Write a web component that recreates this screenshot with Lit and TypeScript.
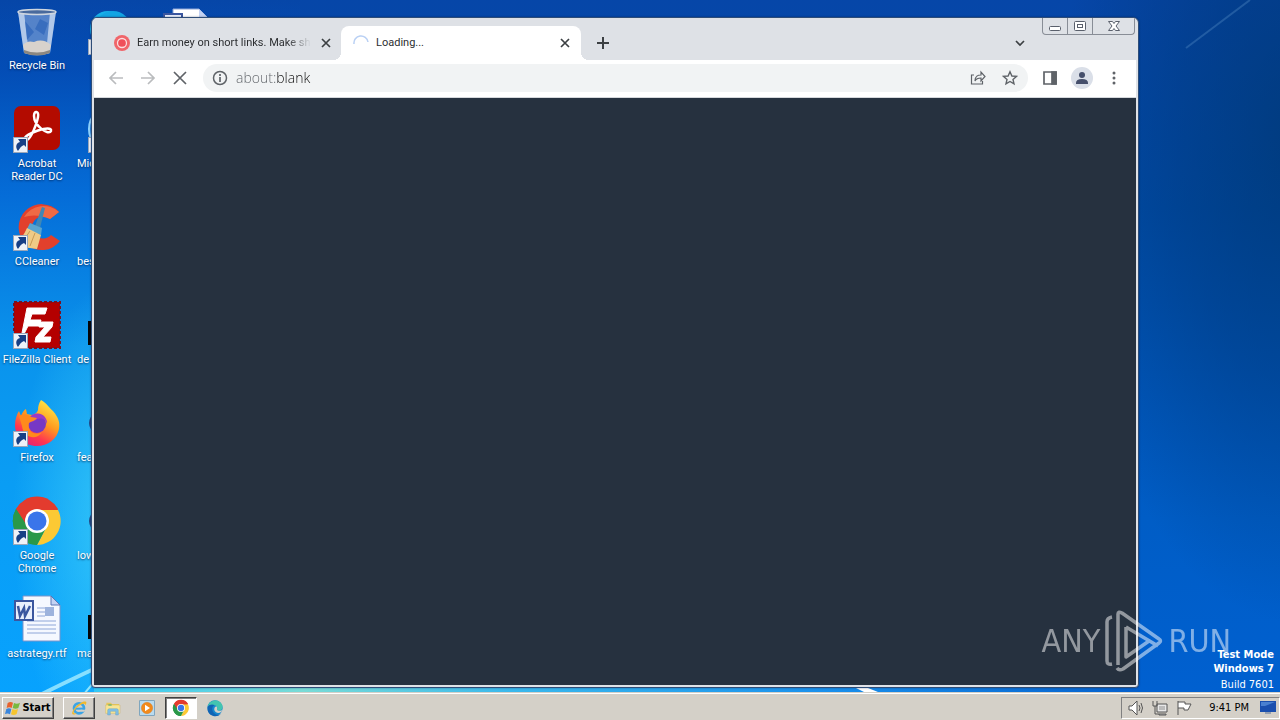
import { css, html, LitElement, svg } from "lit";
import { customElement, property } from "lit/decorators.js";

const art = {
  bin: svg`
    <path d="M5 4h38l-6 42q-13 5-26 0z" fill="#7fa3d8" fill-opacity=".65" />
    <path d="M5 5l6 41 5 1-5-42zM43 5l-6 41-4 1 4-42z" fill="#d9e6f7" fill-opacity=".7" />
    <path d="M12 14l9 11-7 8zM27 12l8 4-4 12-9-6z" fill="#2b62b8" fill-opacity=".65" />
    <path d="M10 38q4-5 11-3 9-4 17 3l-2 8q-12 4-24 0z" fill="#d8d2cc" />
    <path d="M11 43q13 5 26 0v3q-13 5-26 0z" fill="#8c8780" />
    <ellipse cx="24" cy="5" rx="19" ry="2.5" fill="#496a9d" stroke="#cfd6df" stroke-width="1.5" />`,
  acrobat: svg`
    <rect x="1" y="1" width="46" height="44" rx="7" fill="#b30b00" />
    <path d="M12 34c-2-5 28-15 26-8-2 5-17-5-17-15 0-6 5-5 4 1-1 6-7 22-11 23-1 0-2 0-2-1z"
      fill="none" stroke="#fff" stroke-width="2.5" stroke-linejoin="round" />`,
  ccleaner: svg`
    <path d="M46 9A23 23 0 1 0 47 38l-9-6a11 11 0 1 1-1-16z" fill="#e2402c" />
    <path d="M46 9A23 23 0 0 0 11 14q12-4 26 2z" fill="#ef6a45" />
    <path d="M29 4l3 1-5 20-5-2z" fill="#3f87b5" />
    <path d="M17 20l12 5-1 7-14-6z" fill="#58a5cf" />
    <path d="M14 25l14 7-4 14-22-3q8-9 12-18z" fill="#efcb86" />
    <path d="M17 28L8 41M22 30l-5 13" stroke="#c99a54" />`,
  filezilla: svg`
    <rect x="1" y="1" width="46" height="46" fill="#b40000" />
    <rect x="1" y="1" width="46" height="46" fill="none" stroke="#7a1020" stroke-width="2" stroke-dasharray="3 2" />
    <path d="M14 7h20l-2 6H19l-2 6h11l-2 6H15l-6 12H8zM27 21h13l-1 5-9 10h8l-1 5H22l1-5 9-10h-6z"
      fill="#fff" stroke="#fff" />`,
  firefox: svg`
    <defs>
      <linearGradient id="ff" x1=".8" y1="0" x2=".25" y2="1">
        <stop offset="0" stop-color="#fff04a" />
        <stop offset=".45" stop-color="#ff9a1f" />
        <stop offset=".75" stop-color="#ff3750" />
        <stop offset="1" stop-color="#e0217a" />
      </linearGradient>
    </defs>
    <path d="M28 1c7 4 8 8 12 11 6 7 7 12 6 18C44 40 35 47 24 47 11 47 2 38 2 26c0-6 2-11 4-14l2 5c1-3 3-6 5-7l1 5 5 1c3-1 5-2 6-5 0-4 1-7 3-10z"
      fill="url(#ff)" />
    <circle cx="24" cy="25" r="9" fill="#7638c5" />
    <path d="M19 16c9-5 16 3 15 9-2-6-6-6-10-5-2 3-6 2-8 4-1-3 0-6 3-8z" fill="#9a3bc6" />
    <path d="M6 17c5-2 8-2 12 1l6 1c-2 3-5 3-8 5-2 9 6 13 13 9-5 9-19 6-20-6z" fill="#ff8a1c" />`,
  chrome: svg`
    <path d="M24 24L3 12A24 24 0 0 1 45 12z" fill="#e33b2e" />
    <path d="M24 24L24 48A24 24 0 0 1 3 12z" fill="#2a9849" />
    <path d="M24 13h21A24 24 0 0 1 24 48l10-19z" fill="#fcc934" />
    <path d="M14 29L3 12A24 24 0 0 1 45 13H24z" fill="#e33b2e" />
    <path d="M14 29L3 12A24 24 0 0 0 24 48l10-19z" fill="#2a9849" />
    <circle cx="24" cy="24" r="12" fill="#fff" />
    <circle cx="24" cy="24" r="9.5" fill="#3a75ea" />`,
  word: svg`
    <path d="M10 1h28l9 9v36H10z" fill="#f5f8ff" stroke="#7c93c9" />
    <path d="M38 1v9h9z" fill="#c3d2f3" stroke="#5d76b4" />
    <path d="M24 13h8M24 17h8M24 21h8M14 26h29M14 30h29M14 34h29M14 38h29" stroke="#8ea6d8" />
    <rect x="32" y="12" width="9" height="9" fill="#9db3dd" />
    <rect x="2" y="6" width="18" height="19" fill="#e9effc" stroke="#3a569f" stroke-width="2" />
    <path d="M5 11l2 10 4-8 1 8 5-10" fill="none" stroke="#3a569f" stroke-width="2.5" />`,
  skype: svg`<circle cx="20" cy="22" r="18" fill="#17b0ea" /><circle cx="25" cy="22" r="18" fill="#12a4e4" />`,
  docs: svg`
    <path d="M10 2h26l8 8v30H10z" fill="#fff" stroke="#8ea6d8" />
    <path d="M36 2v8h8z" fill="#c3d2f3" />
    <rect x="1" y="7" width="18" height="18" fill="#e9effc" stroke="#3a569f" stroke-width="2" />`,
  swirl: svg`<circle cx="24" cy="24" r="23" fill="#2a86e0" stroke="#8fd4ff" stroke-width="2" />`,
  black: svg`<rect x="0" y="20" width="48" height="24" fill="#050608" />`,
  dim: svg`<ellipse cx="24" cy="24" rx="23" ry="16" fill="#254a86" />`,
  ie: svg`
    <circle cx="24" cy="25" r="15" fill="none" stroke="#3ba4e6" stroke-width="8" />
    <path d="M12 23h28v6H12z" fill="#3ba4e6" />
    <path d="M29 29h14l-3 6H29z" fill="#d4d0c8" />
    <path d="M5 43C-3 34 30-1 45 5c3 3 0 8-3 11C43 1 9 25 8 37c0 4 5 4 10 1-4 5-10 7-13 5z" fill="#f0b92d" />`,
  explorer: svg`
    <path d="M4 8h14l3 4h21v12H4z" fill="#e8c75c" />
    <path d="M2 15h43v25H2z" fill="#f8e594" stroke="#c8a744" />
    <path d="M10 13h10v4H10z" fill="#63b56b" />
    <path d="M8 45V31q0-5 5-5h22q5 0 5 5v14h-8V34H16v11z" fill="#80bfe4" stroke="#4b91c0" />`,
  player: svg`
    <rect x="2" y="2" width="44" height="44" fill="#b9dbef" stroke="#5a8fb4" stroke-width="2" />
    <circle cx="24" cy="24" r="17" fill="#f18a1c" stroke="#d86b0a" />
    <path d="M18 14l15 10-15 10z" fill="#fff" />`,
  edge: svg`
    <circle cx="24" cy="24" r="23" fill="#1687cf" />
    <path d="M2 20C5 5 19-1 31 2c13 4 19 16 14 25-4 7-14 5-15 2 3-8-2-13-9-13C11 14 5 17 2 20z" fill="#43c5b0" />
    <path d="M2 20c5-7 14-8 21-5-9 4-10 17-1 25 6 6 13 5 19 3C29 54 5 49 2 30z" fill="#1164b4" />
    <path d="M30 29c3 5 12 4 17 0-1 7-12 13-20 8-7-5-7-15 1-18 3 3 3 6 2 10z" fill="#d4d0c8" />`,
  flag: svg`
    <path d="M8 9q8-6 16-1l-4 16q-7-5-15 0z" fill="#e8622c" />
    <path d="M27 9q9 5 18-1l-5 16q-8 4-17 0z" fill="#79b93d" />
    <path d="M4 27q8-5 15 0l-4 16q-7-5-15-1z" fill="#3a86dc" />
    <path d="M22 27q9 5 17 0l-4 15q-8 5-17 1z" fill="#f6c52f" />`,
};

const line = {
  back: svg`<path d="M15 8H2M8 2L2 8l6 6" />`,
  forward: svg`<path d="M1 8h13M8 2l6 6-6 6" />`,
  stop: svg`<path d="M2 2l12 12M14 2L2 14" />`,
  close: svg`<path d="M4 4l8 8M12 4l-8 8" />`,
  plus: svg`<path d="M8 2v12M2 8h12" stroke-width="2" />`,
  chevron: svg`<path d="M4 6l4 4 4-4" />`,
  info: svg`<circle cx="8" cy="8" r="6.5" stroke-width="1.5" /><path d="M8 7v5M8 4v2" />`,
  share: svg`<path d="M4 5H1.5v9h11v-3M5 11c0-5 3-6 6-6V2l4 4.500-4 4.500V8c-3 0-5 1-6 3z" stroke-width="1.2" />`,
  star: svg`<path d="M8 1.800l1.900 4.200 4.500.4-3.400 3 1 4.500L8 11.500l-4 2.400 1-4.500-3.400-3L6.100 6z" stroke-width="1.4" />`,
  panel: svg`<path d="M2 2h12v12H2z" /><path d="M10 2h4v12h-4z" fill="currentColor" />`,
  person: svg`<g fill="currentColor" stroke="none"><circle cx="8" cy="5" r="3" /><path d="M2 13q0-4 6-4t6 4v1H2z" /></g>`,
  more: svg`<g fill="currentColor" stroke="none"><circle cx="8" cy="3" r="1.5" /><circle cx="8" cy="8" r="1.5" /><circle cx="8" cy="13" r="1.5" /></g>`,
  spinner: svg`<path d="M1 9a7 7 0 0 1 14-2" stroke="#b9d0f4" stroke-width="1.5" />`,
  target: svg`
    <circle cx="8" cy="8" r="8" fill="#f0656a" stroke="none" />
    <circle cx="8" cy="8" r="4.5" fill="#f0505a" stroke="#fbdfe1" stroke-width="1.3" />`,
  sound: svg`
    <path d="M1 6h3l5-5v14l-5-5H1z" fill="#fff" stroke-width="1" />
    <path d="M11 5q2 3 0 6M13 3q3 5 0 10" stroke-width="1" />`,
  network: svg`
    <path d="M5 4h10v8H5zM7 14h7v1H7z" fill="#e8e8e8" stroke-width="1" />
    <path d="M1 1v5h4V1M3 6v8h4" stroke-width="1" />
    <path d="M7 6h6v4H7z" fill="#bbb" stroke="none" />`,
  banner: svg`<path d="M2 15V1M2 2h7v2h6l-3 6H8V8H2" fill="#fff" stroke-width="1" />`,
  monitor: svg`
    <path d="M0 1h16v11H0z" fill="#1a4fae" stroke="none" />
    <path d="M1 2h14L5 6H1z" fill="#4a80d0" stroke="none" />
    <path d="M5 13h6" stroke="#8a98ad" />`,
};

@customElement("line-icon")
class LineIcon extends LitElement {
  @property() name: keyof typeof line = "close";

  static styles = css`
    :host {
      display: block;
      flex: none;
      width: 16px;
      height: 16px;
    }
    svg {
      display: block;
    }
  `;

  render() {
    return html`<svg
      viewBox="0 0 16 16"
      fill="none"
      stroke="currentColor"
      stroke-width="1.7"
      aria-hidden="true"
    >
      ${line[this.name]}
    </svg>`;
  }
}

@customElement("color-icon")
class ColorIcon extends LitElement {
  @property() name: keyof typeof art = "chrome";
  @property({ type: Boolean }) shortcut = false;

  static styles = css`
    :host {
      display: block;
      flex: none;
    }
    svg {
      display: block;
      overflow: visible;
    }
  `;

  render() {
    return html`<svg viewBox="0 0 48 48" aria-hidden="true">
      ${art[this.name]}
      ${this.shortcut
        ? svg`
          <rect x=".5" y="32.5" width="14" height="15" fill="#eef2f8" stroke="#9aa7ba" />
          <path d="M5 46c-3-4-2-8 2-9l-2-3h8v8l-2-2c-3 1-4 3-6 6z" fill="#173f85" />`
        : ""}
    </svg>`;
  }
}

@customElement("browser-window")
class BrowserWindow extends LitElement {
  static styles = css`
    :host {
      display: flex;
      flex-direction: column;
      box-sizing: border-box;
      border: 1px solid #2e4d78;
      border-radius: 6px 6px 4px 4px;
      background: #dfe2e7;
      padding: 0 2px 2px;
      color: #3c4043;
      overflow: hidden;
      box-shadow: 0 0 2px rgba(0, 20, 60, 0.5);
    }
    button {
      display: grid;
      place-items: center;
      border: 0;
      padding: 0;
      background: none;
      color: inherit;
      font: inherit;
    }
    .strip {
      display: flex;
      align-items: flex-end;
      height: 42px;
      padding-left: 8px;
      background: #dee1e6;
    }
    .tab {
      position: relative;
      display: flex;
      align-items: center;
      box-sizing: border-box;
      width: 239px;
      height: 34px;
      padding: 0 7px 0 12px;
      gap: 7px;
    }
    .tab.active {
      width: 240px;
      padding-right: 8px;
      background: #fff;
      border-radius: 8px 8px 0 0;
    }
    .tab.active::before,
    .tab.active::after {
      content: "";
      position: absolute;
      bottom: 0;
      width: 8px;
      height: 8px;
    }
    .tab.active::before {
      right: 100%;
      background: radial-gradient(circle at 0 0, transparent 8px, #fff 8px);
    }
    .tab.active::after {
      left: 100%;
      background: radial-gradient(circle at 100% 0, transparent 8px, #fff 8px);
    }
    .title {
      display: block;
      flex: 1;
      min-width: 0;
      overflow: hidden;
      text-align: left;
      white-space: nowrap;
      line-height: 16px;
      color: #2c2e31;
    }
    .title.long {
      mask-image: linear-gradient(to left, transparent, #000 24px);
    }
    .add,
    .search {
      width: 28px;
      height: 34px;
      margin-left: 8px;
    }
    .search {
      margin: 0 8px 0 auto;
    }
    .caption {
      display: flex;
      align-self: flex-start;
      box-sizing: border-box;
      height: 17px;
      margin-right: 1px;
      border: 1px solid #888d96;
      border-top: 0;
      border-radius: 0 0 4px 4px;
    }
    .caption button {
      width: 25px;
      border-right: 1px solid #888d96;
    }
    .caption button:last-child {
      width: 41px;
      border: 0;
    }
    .caption svg {
      display: block;
      width: 14px;
      height: 12px;
    }
    .toolbar {
      display: flex;
      align-items: center;
      box-sizing: border-box;
      height: 38px;
      padding: 0 6px 1px;
      background: #fff;
      border-bottom: 1px solid #d5d8dc;
      color: #5f6368;
    }
    .tool {
      width: 32px;
      height: 32px;
    }
    .tool[disabled] {
      color: #babcbe;
    }
    .omnibox {
      display: flex;
      align-items: center;
      flex: 1;
      min-width: 0;
      height: 28px;
      margin: 0 6px 0 7px;
      padding: 0 2px 0 9px;
      border-radius: 14px;
      background: #f1f3f4;
    }
    .address {
      flex: 1;
      min-width: 0;
      margin-left: 8px;
      border: 0;
      padding: 0;
      outline: 0;
      font: 14px/20px "Open Sans", "Noto Sans", sans-serif;
      font-weight: 300;
      color: transparent;
      /* scheme is muted, the rest is dark */
      background: linear-gradient(to right, #5f6368 40px, #111 40px);
      background-clip: text;
      -webkit-background-clip: text;
    }
    .avatar {
      display: grid;
      place-items: center;
      width: 22px;
      height: 22px;
      border-radius: 50%;
      background: #dadfe8;
      color: #454f6b;
    }
    .page {
      flex: 1;
      background: #26313f;
    }
  `;

  tool(name: string, label: string, disabled = false) {
    return html`<button class="tool" aria-label=${label} ?disabled=${disabled}>
      <line-icon name=${name}></line-icon>
    </button>`;
  }

  render() {
    return html`
      <div class="strip">
        <div class="tab">
          <line-icon name="target"></line-icon>
          <button class="title long">Earn money on short links. Make sho</button>
          <button aria-label="Close tab"><line-icon name="close"></line-icon></button>
        </div>
        <div class="tab active">
          <line-icon name="spinner"></line-icon>
          <button class="title">Loading...</button>
          <button aria-label="Close tab"><line-icon name="close"></line-icon></button>
        </div>
        <button class="add" aria-label="New tab"><line-icon name="plus"></line-icon></button>
        <button class="search" aria-label="Search tabs"><line-icon name="chevron"></line-icon></button>
        <div class="caption">
          <button aria-label="Minimize">
            <svg viewBox="0 0 14 12" fill="#fff" stroke="#5a606c">
              <rect x="1.5" y="6.5" width="11" height="4" rx="1" />
            </svg>
          </button>
          <button aria-label="Maximize">
            <svg viewBox="0 0 14 12" fill="#fff" stroke="#5a606c">
              <rect x="1.5" y="1.5" width="11" height="9" rx="1" />
              <rect x="4.5" y="4.5" width="5" height="3" />
            </svg>
          </button>
          <button aria-label="Close">
            <svg viewBox="0 0 14 12" fill="#fff" stroke="#5a606c">
              <path d="M1.500 1.500h4L7 3.500l1.500-2h4L9 6l3.500 4.500h-4L7 8.500l-1.500 2h-4L5 6z" />
            </svg>
          </button>
        </div>
      </div>
      <div class="toolbar">
        ${this.tool("back", "Back", true)} ${this.tool("forward", "Forward", true)}
        ${this.tool("stop", "Stop loading")}
        <div class="omnibox">
          <button aria-label="Site information"><line-icon name="info"></line-icon></button>
          <input class="address" aria-label="Address" value="about:blank" />
          ${this.tool("share", "Share")} ${this.tool("star", "Bookmark")}
        </div>
        ${this.tool("panel", "Side panel")}
        <button class="tool" aria-label="Profile">
          <span class="avatar"><line-icon name="person"></line-icon></span>
        </button>
        ${this.tool("more", "Menu")}
      </div>
      <div class="page"></div>
    `;
  }
}

const shortcuts = [
  { icon: "bin", label: "Recycle Bin" },
  { icon: "acrobat", label: "Acrobat\nReader DC", link: true },
  { icon: "ccleaner", label: "CCleaner", link: true },
  { icon: "filezilla", label: "FileZilla Client", link: true },
  { icon: "firefox", label: "Firefox", link: true },
  { icon: "chrome", label: "Google\nChrome", link: true },
  { icon: "word", label: "astrategy.rtf" },
];

// mostly covered by the open window
const covered = [
  { icon: "skype", label: "", link: true },
  { icon: "swirl", label: "Mic", link: true },
  { icon: "", label: "bes" },
  { icon: "black", label: "de" },
  { icon: "dim", label: "fea" },
  { icon: "dim", label: "low" },
  { icon: "black", label: "ma" },
];

@customElement("app-root")
class AppRoot extends LitElement {
  static styles = css`
    :host {
      display: flex;
      flex-direction: column;
      height: 100vh;
      overflow: hidden;
      font: 11px/13px "DejaVu Sans Condensed", "Noto Sans", sans-serif;
      color: #fff;
    }
    .desktop {
      position: relative;
      flex: 1;
      min-height: 0;
      display: flex;
      background:
        radial-gradient(ellipse 8% 35% at 9% 76%, rgba(70, 215, 250, 0.7), transparent),
        linear-gradient(to top, #07a2fe, #0a9df4 30%, #0a93ec 50%, rgba(5, 110, 218, 0.95) 72%, rgba(3, 80, 190, 0.6) 90%, transparent) 0 0 / 300px 100% no-repeat,
        radial-gradient(ellipse 18% 70% at 101% 20%, rgba(0, 55, 115, 0.75), rgba(0, 55, 120, 0.45) 50%, transparent),
        linear-gradient(to bottom, #0646a8, #004ca8 30%, #005dc6 75%, #0060d0);
    }
    .rays {
      position: absolute;
      inset: 0;
      width: 100%;
      height: 100%;
    }
    .icons {
      position: relative;
      width: 74px;
      margin: 7px 1px 0 0;
      padding: 0;
      list-style: none;
      font-family: Roboto, "Noto Sans", sans-serif;
    }
    .icons li {
      display: flex;
      flex-direction: column;
      align-items: center;
      height: 98px;
      gap: 4px;
    }
    .icons color-icon,
    .icons .blank {
      width: 48px;
      height: 48px;
    }
    .icons a {
      color: #fff;
      text-decoration: none;
      text-align: center;
      text-shadow: 0 1px 2px rgba(0, 20, 60, 0.7);
      white-space: pre-line;
    }
    .icons.covered a {
      align-self: flex-start;
      margin-left: 2px;
    }
    browser-window {
      position: absolute;
      inset: 17px 141px 4px 91px;
      font-family: Roboto, "Noto Sans", sans-serif;
    }
    .build {
      position: absolute;
      right: 6px;
      bottom: 0;
      text-align: right;
      line-height: 14px;
    }
    .build p {
      margin: 0;
    }
    .build .number {
      margin-top: 2px;
    }
    .brand {
      position: absolute;
      right: 49px;
      bottom: 20px;
      display: flex;
      align-items: center;
      gap: 5px;
      font: 32px/62px "DejaVu Sans Condensed", "Noto Sans", sans-serif;
      opacity: 0.5;
    }
    .brand svg {
      width: 58px;
      height: 62px;
    }
    .taskbar {
      display: flex;
      align-items: center;
      box-sizing: border-box;
      height: 28px;
      padding: 2px 0 0 2px;
      border-top: 1px solid #d4d0c8;
      box-shadow: inset 0 1px #fff;
      background: #d4d0c8;
      color: #000;
    }
    .taskbar button {
      display: flex;
      align-items: center;
      justify-content: center;
      box-sizing: border-box;
      width: 32px;
      height: 22px;
      padding: 0;
      border: 1px solid transparent;
      margin-right: 2px;
      background: none;
      color: inherit;
      font: inherit;
    }
    .taskbar color-icon {
      width: 16px;
      height: 16px;
    }
    .taskbar .start {
      width: 52px;
      gap: 1px;
      margin-right: 9px;
      font-weight: 700;
    }
    .taskbar .start,
    .taskbar .raised {
      border-color: #fff #404040 #404040 #fff;
      box-shadow: inset -1px -1px #808080;
    }
    .taskbar .pressed {
      border-color: #404040 #fff #fff #404040;
      background: #fff;
      box-shadow: inset 1px 1px #808080;
    }
    .tray {
      display: flex;
      align-items: center;
      box-sizing: border-box;
      height: 22px;
      margin-left: auto;
      padding: 0 3px 0 6px;
      gap: 8px;
      border: 1px solid;
      border-color: #808080 #fff #fff #808080;
      color: #555;
    }
    .clock {
      margin: 0 3px 0 9px;
      color: #000;
    }
  `;

  shortcut(item: { icon: string; label: string; link?: boolean }) {
    return html`<li>
      ${item.icon
        ? html`<color-icon name=${item.icon} ?shortcut=${item.link}></color-icon>`
        : html`<span class="blank"></span>`}
      <a href="#">${item.label}</a>
    </li>`;
  }

  render() {
    return html`
      <main class="desktop">
        <svg class="rays" viewBox="0 0 1280 692" preserveAspectRatio="none" fill="none">
          <defs>
            <linearGradient id="horizon">
              <stop offset="0" stop-color="#35c8f4" />
              <stop offset=".2" stop-color="#79dbd6" />
              <stop offset=".4" stop-color="#3ab8ec" />
              <stop offset=".7" stop-color="#1a90ec" />
              <stop offset="1" stop-color="#0560cc" />
            </linearGradient>
          </defs>
          <path d="M1186 48L1250 0" stroke="#5c93c8" stroke-opacity=".35" stroke-width="2" />
          <path d="M42 694Q66 682 96 668" stroke="#a5ecff" stroke-width="4" stroke-opacity=".8" />
          <rect x="94" y="687" width="1044" height="5" fill="url(#horizon)" />
          <path d="M84 694l10-12" stroke="#8fe6ff" stroke-width="2" />
          <path d="M856 688h12l10 4h-14z" fill="#fff" />
        </svg>
        <ul class="icons">
          ${shortcuts.map((s) => this.shortcut(s))}
        </ul>
        <ul class="icons covered">
          ${covered.map((s) => this.shortcut(s))}
        </ul>
        <ul class="icons">
          ${this.shortcut({ icon: "docs", label: "" })}
        </ul>
        <browser-window></browser-window>
        <div class="brand">
          <span>ANY</span>
          <svg viewBox="0 0 58 62" fill="none" stroke="#fff" stroke-width="3.5" stroke-linejoin="round">
            <path d="M13 55L13 4q0-3 4-1l37 26q3 2 0 4L18 59q-4 2-6-1" />
            <path d="M7 7Q2 8 2 12v39q0 4 5 3" />
            <path d="M21 17v30l23-16M21 17l32 19" />
          </svg>
          <span>RUN</span>
        </div>
        <div class="build">
          <p><b>Test Mode</b></p>
          <p><b>Windows 7</b></p>
          <p class="number">Build 7601</p>
        </div>
      </main>
      <footer class="taskbar">
        <button class="start"><color-icon name="flag"></color-icon>Start</button>
        <button class="raised" aria-label="Internet Explorer"><color-icon name="ie"></color-icon></button>
        <button aria-label="Windows Explorer"><color-icon name="explorer"></color-icon></button>
        <button aria-label="Media Player"><color-icon name="player"></color-icon></button>
        <button class="pressed" aria-label="Google Chrome"><color-icon name="chrome"></color-icon></button>
        <button aria-label="Microsoft Edge"><color-icon name="edge"></color-icon></button>
        <div class="tray">
          <line-icon name="sound"></line-icon>
          <line-icon name="network"></line-icon>
          <line-icon name="banner"></line-icon>
          <time class="clock">9:41 PM</time>
          <line-icon name="monitor"></line-icon>
        </div>
      </footer>
    `;
  }
}
